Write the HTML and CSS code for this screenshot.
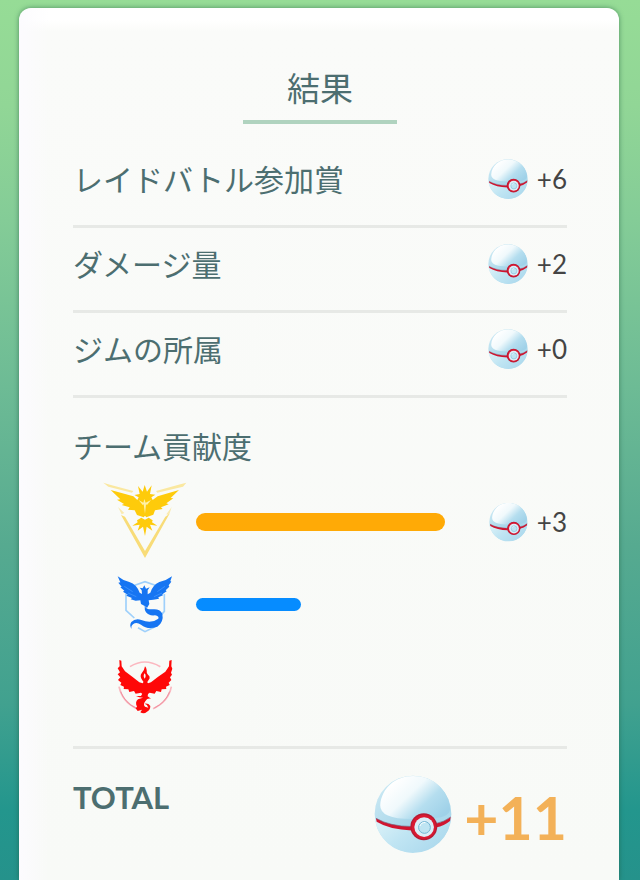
FILE: index.html
```html
<!DOCTYPE html>
<html lang="ja">
<head>
    <meta charset="UTF-8">
    <meta name="viewport" content="width=device-width, initial-scale=1.0">
    <title>結果</title>
    <link rel="stylesheet" href="styles.css">
</head>
<body>
    <!-- Shared ball icon -->
    <svg class="defs" width="0" height="0" aria-hidden="true">
        <defs>
            <linearGradient id="ballBase" x1="0" y1="0" x2="1" y2="1">
                <stop offset="0" stop-color="#d3edf6"/>
                <stop offset="0.55" stop-color="#a5d5e9"/>
                <stop offset="1" stop-color="#b5dff0"/>
            </linearGradient>
            <linearGradient id="ballShine" x1="0.15" y1="0.2" x2="1" y2="0.75">
                <stop offset="0" stop-color="#ffffff"/>
                <stop offset="0.35" stop-color="#f0f9fc"/>
                <stop offset="0.65" stop-color="#b5deef"/>
                <stop offset="1" stop-color="#9fd1e8"/>
            </linearGradient>
            <linearGradient id="ballBottom" x1="0" y1="0" x2="1" y2="0.6">
                <stop offset="0" stop-color="#e0f4f9"/>
                <stop offset="0.5" stop-color="#c0e5f3"/>
                <stop offset="1" stop-color="#acd9ed"/>
            </linearGradient>
        </defs>
        <symbol id="ball" viewBox="43 106 238 238">
            <circle cx="162" cy="225" r="117" fill="url(#ballBase)"/>
            <path d="M46 240Q90 266 158 268Q230 266 279 234A117 117 0 0 1 46 240Z" fill="url(#ballBottom)"/>
            <path d="M62 198C66 146 108 109 162 109C222 109 268 148 275 207C278 229 246 240 226 236Q197 218 167 240Q61 242 62 198Z" fill="url(#ballShine)"/>
            <path d="M49 238Q92 263 158 263L158 275Q92 274 51 249ZM232 254Q258 249 277 234L275 246Q258 260 232 266Z" fill="#d0142f"/>
            <path d="M49 238Q92 263 158 263M232 254Q258 249 277 234" fill="none" stroke="#79677f" stroke-width="2"/>
            <circle cx="195" cy="264" r="41" fill="#b51b35"/>
            <circle cx="195" cy="264" r="37" fill="#d91831"/>
            <circle cx="196" cy="265" r="30" fill="#dceef8"/>
            <circle cx="197" cy="266" r="18" fill="#bee4f2" stroke="#72b6d3" stroke-width="3"/>
            <path d="M183 262Q187 250 200 251" fill="none" stroke="#fff" stroke-width="3"/>
        </symbol>
    </svg>

    <main class="card">
        <h1 class="title">結果</h1>

        <div class="row">
            <span class="label">レイドバトル参加賞</span>
            <span class="reward"><svg class="ball"><use href="#ball"/></svg>+6</span>
        </div>
        <div class="row">
            <span class="label">ダメージ量</span>
            <span class="reward"><svg class="ball"><use href="#ball"/></svg>+2</span>
        </div>
        <div class="row">
            <span class="label">ジムの所属</span>
            <span class="reward"><svg class="ball"><use href="#ball"/></svg>+0</span>
        </div>

        <section class="teams">
            <h2 class="label">チーム貢献度</h2>

            <div class="team">
                <svg class="emblem" viewBox="0 17 330 249">
                    <path d="M40 25L60 31L130 50L126 55L55 37ZM289 25L271 30L198 50L202 55L279 37Z" fill="#fae8a0"/>
                    <path d="M84 98L95 120L103 116ZM245 98L229 120L237 123Z" fill="#faeab0"/>
                    <path d="M93 122L105 127L165 230L226 127L238 119L165 251Z" fill="#f8dc78"/>
                    <path d="M62 47L130 66L142 77L146 69L133 62L149 59L144 35L158 52L164 32L171 52L185 33L180 59L196 61L184 69L188 77L203 66L267 47L242 71L250 72L229 87L236 90L213 99L218 104L195 108L190 121L169 129L165 124L161 129L141 122L134 108L114 106L119 99L95 92L102 89L81 76L91 75Z" fill="#fecb0b"/>
                    <path d="M146 77L160 85L163 74L167 85L183 77L171 92L168 90L165 118L161 90L158 92Z" fill="#fff1a9"/>
                    <path d="M154 130L165 136L176 130L188 138L186 144L202 154L180 151L187 169L170 157L165 185L159 157L143 169L149 151L127 154L143 144L141 138Z" fill="#fecb0b"/>
                </svg>
                <div class="track"><div class="bar instinct" style="width: 100%"></div></div>
                <span class="reward"><svg class="ball"><use href="#ball"/></svg>+3</span>
            </div>

            <div class="team">
                <svg class="emblem" viewBox="-45 -7 330 249">
                    <path d="M83 62L120 49L157 62M63 86L63 135L88 158M178 86L178 138L169 148M99 187L120 199L150 184" fill="none" stroke="#9ed0fb" stroke-width="5"/>
                    <path d="M38 33Q54 46 73 50Q95 57 104 82L111 86L110 75L104 67L113 69L118 60L123 70L134 66L128 75L128 87L136 82Q143 59 163 50Q184 46 201 33L196 47L199 49L191 60L193 64L182 75L185 78L172 87L174 90L160 96L162 100L145 103L131 105L133 116L126 128L119 122L108 116L106 105L92 106L77 102L81 98L64 91L68 88L54 79L58 76L46 66L50 64L40 52L46 51Z" fill="#1675f2"/>
                    <path d="M119 121Q123 133 141 132Q164 129 172 145Q177 170 157 184Q129 195 108 178Q94 169 84 177Q77 182 80 191Q72 181 79 170Q91 158 109 164Q139 176 160 160Q163 152 150 150Q131 152 123 141Q118 134 119 121Z" fill="#1675f2"/>
                    <path d="M58 63L83 79M69 83L94 94M180 63L157 79M171 83L147 94" fill="none" stroke="#4a9cff" stroke-width="2"/>
                </svg>
                <div class="track"><div class="bar mystic" style="width: 42%"></div></div>
            </div>

            <div class="team">
                <svg class="emblem" viewBox="-45 -7 330 249">
                    <path d="M75 55Q119 27 166 55M42 115Q52 162 96 181M199 115Q190 161 144 181" fill="none" stroke="#fbb8c0" stroke-width="5"/>
                    <path d="M47 130Q61 165 93 179M194 130Q181 163 148 179" fill="none" stroke="#ee91a0" stroke-width="3"/>
                    <path d="M43 35L49 37L50 54L60 69Q83 86 103 102L113 105L117 99L125 99L129 105L138 102Q158 85 181 70L192 54L193 37L200 35L199 54L202 61L198 73L201 79L195 87L199 95L191 103L194 110L183 115L184 122L170 123L168 131L154 128L149 136L134 133L125 140L115 140L108 133L92 136L87 128L73 131L70 123L56 122L57 115L46 110L49 103L39 95L46 87L38 78L45 72L38 60L44 54Z" fill="#fe0808"/>
                    <path d="M120 54Q118 67 110 75Q103 84 112 96L118 104L127 101L134 90Q135 83 129 79Q124 74 125 65Q124 57 120 54ZM119 75Q125 83 119 91Q113 83 119 75Z" fill="#fe0808" fill-rule="evenodd"/>
                    <path d="M112 136H129L128 144L138 151Q127 148 122 157Q113 168 120 175L130 178Q127 168 119 166Q130 164 136 173Q136 186 126 190Q117 199 106 192L111 184L98 188L92 180L96 175Q89 162 99 153L114 148Q102 148 93 143L108 143Z" fill="#fe0808"/>
                </svg>
            </div>
        </section>

        <div class="total">
            <span class="total-label">TOTAL</span>
            <span class="total-value"><svg class="ball-large"><use href="#ball"/></svg>+11</span>
        </div>
    </main>
</body>
</html>
```
FILE: styles.css
```css
* {
    box-sizing: border-box;
}
body {
    margin: 0;
    padding: 8px 21px 0 19px;
    min-height: 100vh;
    display: flex;
    flex-direction: column;
    font-family: Lato, "Noto Sans CJK JP", sans-serif;
    background: linear-gradient(#96dc96 0%, #91d696 12%, #84cc97 25%, #6dbb95 44%, #56aa90 62%, #41a18f 80%, #23968d 92%, #25928b 100%);
}
.defs {
    position: absolute;
}
.card {
    flex: 1;
    padding: 58px 52px 20px 54px;
    color: #4c6e70;
    background: linear-gradient(to right, #fcfbfe, rgba(252, 251, 254, 0) 30px), linear-gradient(#ffffff 0, #ffffff 12px, #fafbf9 24px, #f8faf7 100%);
    border-radius: 12px 12px 0 0;
    box-shadow: 0 0 5px rgba(30, 90, 65, 0.6);
}
.title {
    width: fit-content;
    margin: 0 auto 19px;
    padding: 0 44px 10px;
    border-bottom: 4px solid #b0d3bf;
    font-size: 33px;
    font-weight: 400;
    line-height: 44px;
}
.row {
    display: flex;
    justify-content: space-between;
    align-items: center;
    padding: 14px 0 24px;
    border-bottom: 3px solid #e7e9e6;
}
.label {
    margin: 0;
    font-size: 30px;
    font-weight: 400;
    line-height: 44px;
}
.reward {
    display: flex;
    align-items: center;
    gap: 9px;
    color: #444444;
    font-size: 26px;
    line-height: 40px;
}
.ball {
    width: 40px;
    height: 40px;
}
.teams {
    padding: 26px 0 17px;
    border-bottom: 3px solid #e7e9e6;
}
.team {
    display: grid;
    grid-template-columns: 79px 1fr 78px;
    column-gap: 44px;
    align-items: center;
}
.teams .label {
    margin-bottom: 12px;
}
.emblem {
    width: 110px;
    height: 83px;
    margin-left: 17px;
}
.bar {
    border-radius: 10px;
}
.instinct {
    height: 18px;
    background-color: #ffaa06;
}
.mystic {
    height: 13px;
    background-color: #068cff;
}
.total {
    display: flex;
    justify-content: space-between;
    padding-top: 26px;
}
.total-label {
    font-size: 31px;
    font-weight: 700;
    line-height: 44px;
}
.total-value {
    display: flex;
    align-items: flex-start;
    gap: 12px;
    color: #f3b158;
    font-size: 59px;
    font-weight: 700;
    line-height: 85px;
}
.ball-large {
    width: 78px;
    height: 78px;
}
```
